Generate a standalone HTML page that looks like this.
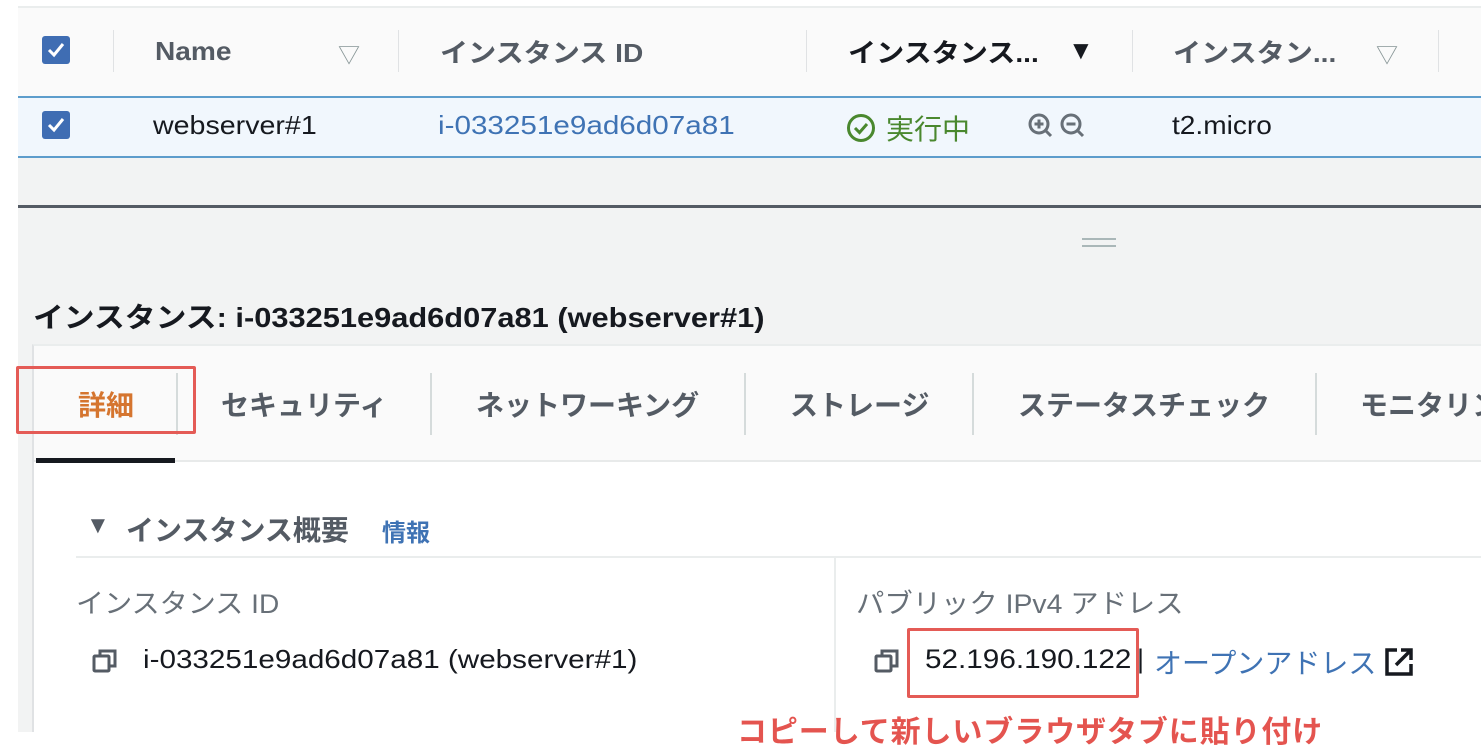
<!DOCTYPE html>
<html><head><meta charset="utf-8"><style>
*{margin:0;padding:0;box-sizing:border-box}
body{width:1481px;height:752px;position:relative;overflow:hidden;background:#fff;font-family:"Liberation Sans","Noto Sans CJK JP",sans-serif;color:#16191f}
.a{position:absolute;white-space:nowrap}
.s{transform-origin:0 50%}
.b{font-weight:bold}
.cb{position:absolute;width:28px;height:28px;background:#3f6db3;border-radius:3px}
.cb svg{position:absolute;left:4px;top:4px}
.vs{position:absolute;width:1px;background:#e0e2e4}
.tsep{position:absolute;width:2px;background:#d5dbdb;top:373px;height:62px}
</style></head><body>
<div class="a" style="left:18px;top:0;width:1463px;height:732px;background:#f2f3f3"></div>
<div class="a" style="left:18px;top:0;width:1463px;height:6px;background:#fff"></div>
<div class="a" style="left:18px;top:6px;width:1463px;height:91px;background:#fafafa;border-top:2px solid #eaeded"></div>
<div class="cb" style="left:42px;top:36px"><svg width="20" height="20" viewBox="0 0 20 20"><path d="M3 10 L8 15 L17 4" stroke="#fff" stroke-width="3" fill="none"/></svg></div>
<div class="vs" style="left:113px;top:30px;height:42px"></div>
<div class="a b s" style="left:155px;top:36px;font-size:26px;color:#545b64;transform:scaleX(1.08)">Name</div>
<div class="a" style="left:338px;top:38px;font-size:22px;color:#879596">▽</div>
<div class="vs" style="left:398px;top:30px;height:42px"></div>
<div class="a b s" style="left:440px;top:33px;font-size:26px;color:#545b64;transform:scaleX(1.08)">インスタンス ID</div>
<div class="vs" style="left:806px;top:30px;height:42px"></div>
<div class="a b s" style="left:848px;top:33px;font-size:26px;color:#16191f;transform:scaleX(1.08)">インスタンス...</div>
<div class="a" style="left:1068px;top:35px;font-size:26px;color:#16191f">▼</div>
<div class="vs" style="left:1132px;top:30px;height:42px"></div>
<div class="a b s" style="left:1173px;top:33px;font-size:26px;color:#545b64;transform:scaleX(1.08)">インスタン...</div>
<div class="a" style="left:1376px;top:38px;font-size:22px;color:#879596">▽</div>
<div class="vs" style="left:1438px;top:30px;height:42px"></div>
<div class="a" style="left:18px;top:96px;width:1463px;height:62px;background:#f1f7fd;border-top:2px solid #5d9dcc;border-bottom:2px solid #5d9dcc"></div>
<div class="cb" style="left:42px;top:111px"><svg width="20" height="20" viewBox="0 0 20 20"><path d="M3 10 L8 15 L17 4" stroke="#fff" stroke-width="3" fill="none"/></svg></div>
<div class="a s" style="left:153px;top:110px;font-size:26px;transform:scaleX(1.1)">webserver#1</div>
<div class="a s" style="left:438px;top:110px;font-size:26px;color:#3f73b4;transform:scaleX(1.14)">i-033251e9ad6d07a81</div>
<svg class="a" style="left:846px;top:113px" width="30" height="30" viewBox="0 0 30 30"><circle cx="15" cy="15" r="12.5" stroke="#4a882e" stroke-width="3" fill="none"/><path d="M9 15 L13.5 19.5 L21 11" stroke="#4a882e" stroke-width="3" fill="none"/></svg>
<div class="a" style="left:886px;top:108px;font-size:28px;color:#4a882e">実行中</div>
<svg class="a" style="left:1026px;top:112px" width="66" height="30" viewBox="0 0 66 30"><g stroke="#687078" stroke-width="3" fill="none"><circle cx="13" cy="12" r="9"/><path d="M19.5 18.5 L25 24"/><path d="M13 7.5v9M8.5 12h9"/><circle cx="45" cy="12" r="9"/><path d="M51.5 18.5 L57 24"/><path d="M40.5 12h9"/></g></svg>
<div class="a s" style="left:1172px;top:110px;font-size:26px;transform:scaleX(1.08)">t2.micro</div>
<div class="a" style="left:18px;top:205px;width:1463px;height:3px;background:#545b64"></div>
<div class="a" style="left:1082px;top:238px;width:34px;height:2px;background:#aab7b8"></div>
<div class="a" style="left:1082px;top:245px;width:34px;height:2px;background:#aab7b8"></div>
<div class="a b s" style="left:33px;top:296px;font-size:28px;transform:scaleX(1.1)">インスタンス: i-033251e9ad6d07a81 (webserver#1)</div>
<div class="a" style="left:32px;top:344px;width:1449px;height:388px;background:#fff;border-left:2px solid #e0e2e4;border-top:2px solid #eaeded"></div>
<div class="a" style="left:34px;top:346px;width:1447px;height:116px;background:#fafafa;border-bottom:2px solid #e8eaea"></div>
<div class="a" style="left:36px;top:458px;width:139px;height:5px;background:#16191f"></div>
<div class="tsep" style="left:176px"></div>
<div class="tsep" style="left:430px"></div>
<div class="tsep" style="left:744px"></div>
<div class="tsep" style="left:972px"></div>
<div class="tsep" style="left:1315px"></div>
<div class="a b" style="left:78px;top:384px;font-size:28px;color:#d5752f">詳細</div>
<div class="a b" style="left:221px;top:384px;font-size:28px;color:#545b64">セキュリティ</div>
<div class="a b" style="left:476px;top:384px;font-size:28px;color:#545b64">ネットワーキング</div>
<div class="a b" style="left:790px;top:384px;font-size:28px;color:#545b64">ストレージ</div>
<div class="a b" style="left:1018px;top:384px;font-size:28px;color:#545b64">ステータスチェック</div>
<div class="a b" style="left:1360px;top:384px;font-size:28px;color:#545b64">モニタリング</div>
<div class="a" style="left:16px;top:366px;width:180px;height:68px;border:3px solid #e45b56;border-radius:2px"></div>
<div class="a" style="left:86px;top:512px;font-size:24px;color:#545b64">▼</div>
<div class="a b" style="left:126px;top:509px;font-size:28px;color:#545b64">インスタンス概要</div>
<div class="a b" style="left:382px;top:513px;font-size:24px;color:#3f73b4">情報</div>
<div class="a" style="left:76px;top:556px;width:1405px;height:2px;background:#eaeded"></div>
<div class="a" style="left:834px;top:558px;width:2px;height:174px;background:#eaeded"></div>
<div class="a s" style="left:76px;top:582px;font-size:27px;color:#687078;transform:scaleX(1.04)">インスタンス ID</div>
<svg class="a" style="left:91px;top:647px" width="28" height="28" viewBox="0 0 28 28"><g stroke="#545b64" stroke-width="3" fill="none"><rect x="3" y="9" width="15" height="15" rx="1"/><path d="M9 9V4h15v15h-6"/></g></svg>
<div class="a s" style="left:143px;top:644px;font-size:26px;transform:scaleX(1.14)">i-033251e9ad6d07a81 (webserver#1)</div>
<div class="a s" style="left:856px;top:582px;font-size:27px;color:#687078;transform:scaleX(1.05)">パブリック IPv4 アドレス</div>
<svg class="a" style="left:873px;top:647px" width="28" height="28" viewBox="0 0 28 28"><g stroke="#545b64" stroke-width="3" fill="none"><rect x="3" y="9" width="15" height="15" rx="1"/><path d="M9 9V4h15v15h-6"/></g></svg>
<div class="a s" style="left:925px;top:644px;font-size:27px;transform:scaleX(1.1)">52.196.190.122</div>
<div class="a" style="left:1137px;top:644px;font-size:27px">|</div>
<div class="a" style="left:1154px;top:642px;font-size:28px;color:#3f73b4">オープンアドレス</div>
<svg class="a" style="left:1384px;top:647px" width="30" height="30" viewBox="0 0 30 30"><g stroke="#16191f" stroke-width="3.5" fill="none"><path d="M13 3H3v24h24V17"/><path d="M12 18L26 4M17 3h10v10"/></g></svg>
<div class="a" style="left:907px;top:628px;width:232px;height:70px;border:3px solid #e45b56;border-radius:2px"></div>
<div class="a b" style="left:737px;top:707px;font-size:30px;color:#e4544f;letter-spacing:0.9px">コピーして新しいブラウザタブに貼り付け</div>
</body></html>
